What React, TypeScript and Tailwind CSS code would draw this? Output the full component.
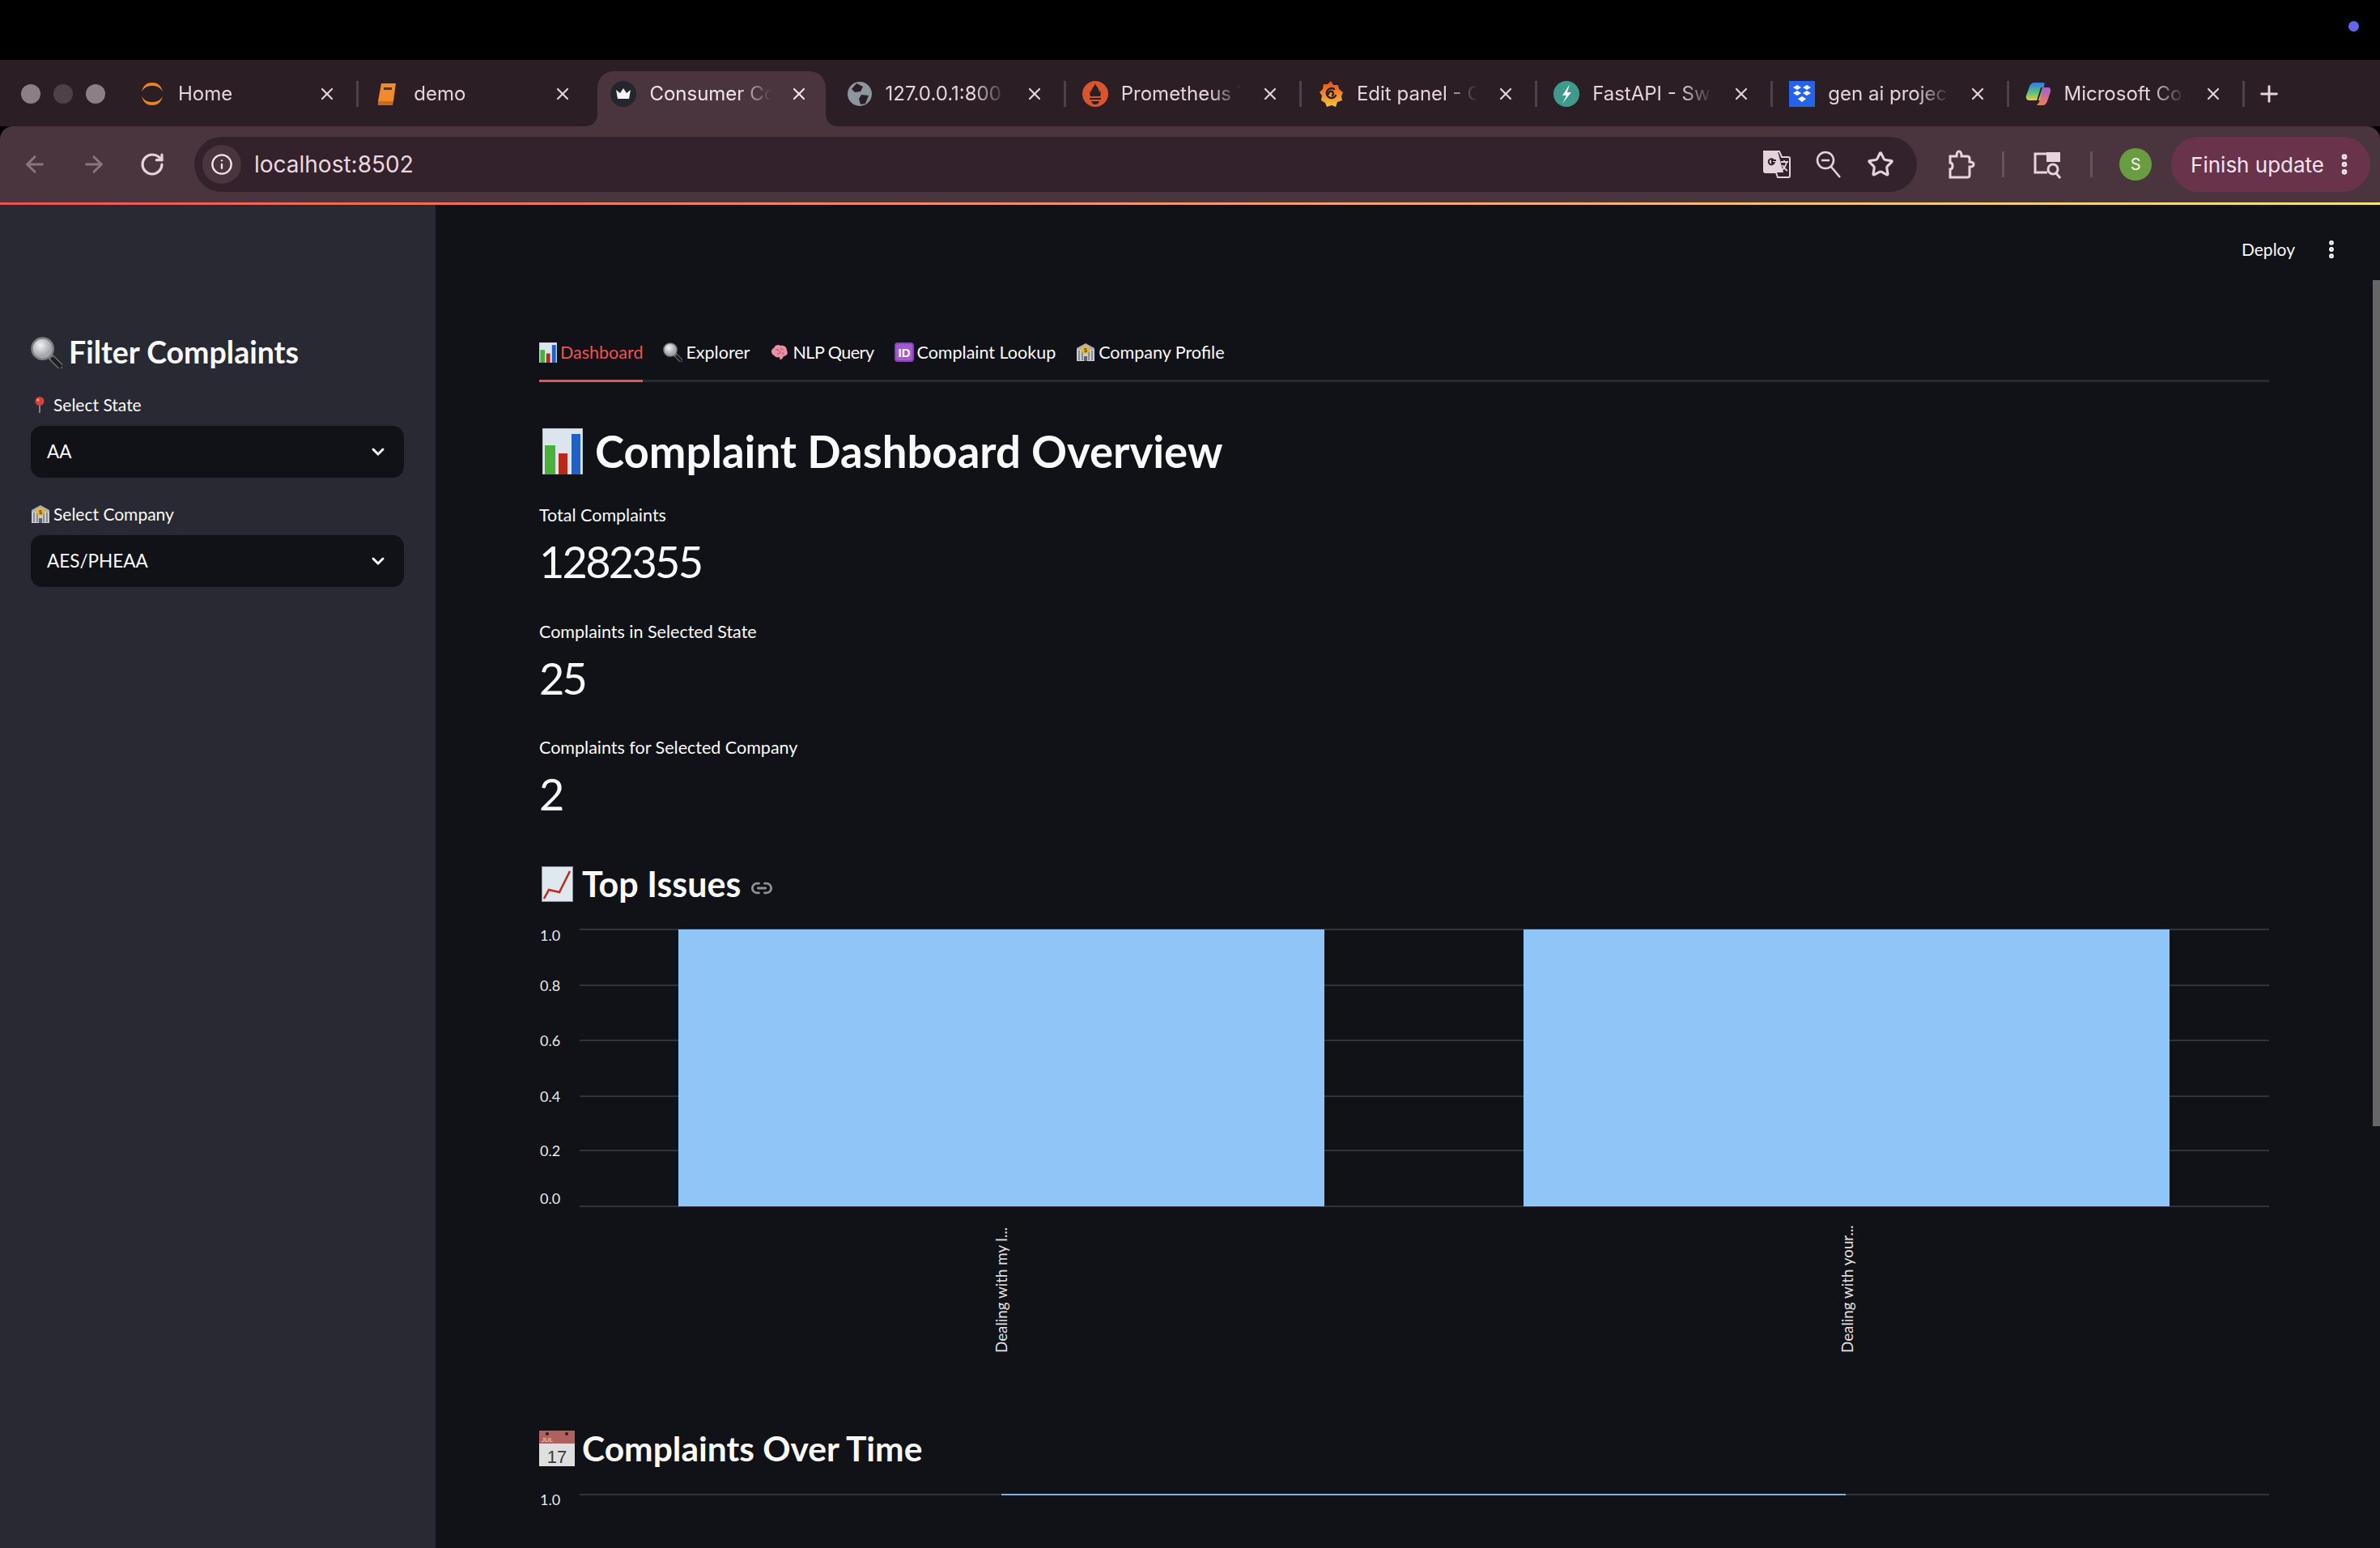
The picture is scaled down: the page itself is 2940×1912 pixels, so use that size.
import React from "react";
import { ArrowLeft, ArrowRight, RotateCw, Info, Star, Plus, X, EllipsisVertical, ChevronDown, Link2 } from "lucide-react";

const HomeIcon = () => (
  <svg viewBox="0 0 32 32" className="w-8 h-8 shrink-0">
    <path d="M3 13C5 5 10 2 16 2s11 3 13 11C25 7 21 6 16 6S7 7 3 13Z" fill="#e8822e" />
    <path d="M3 19c2 8 7 11 13 11s11-3 13-11c-4 6-8 7-13 7s-9-1-13-7Z" fill="#e8822e" />
  </svg>
);
const BookIcon = () => (
  <svg viewBox="0 0 32 32" className="w-8 h-8 shrink-0">
    <path d="M8 3h18l-3 22H4Z" fill="#f08a2c" />
    <path d="M4 25h19l-1 5H4Z" fill="#c96a1a" />
    <rect x="11" y="8" width="10" height="3" fill="#5c3415" />
  </svg>
);
const CrownIcon = () => (
  <svg viewBox="0 0 32 32" className="w-8 h-8 shrink-0">
    <circle cx="16" cy="16" r="16" fill="#23262e" />
    <path d="M7 11l5 4 4-6 4 6 5-4-2 11H9Z" fill="#f4f4f4" />
  </svg>
);
const GlobeIcon = () => (
  <svg viewBox="0 0 32 32" className="w-8 h-8 shrink-0">
    <circle cx="16" cy="16" r="15" fill="#8b979d" />
    <path d="M12 3l8 4-3 6-7 1-4-4ZM18 17l9 1-4 10-6 1-2-7Z" fill="#2c1e25" />
  </svg>
);
const PrometheusIcon = () => (
  <svg viewBox="0 0 32 32" className="w-8 h-8 shrink-0">
    <circle cx="16" cy="16" r="16" fill="#d9552e" />
    <path d="M16 3c1 4 5 6 5 11l1-2c1 3 1 5 0 7H10c-1-2-1-4 0-7l1 2c0-5 4-7 5-11Z" fill="#2c1e25" />
    <rect x="9" y="21" width="14" height="2" fill="#2c1e25" />
    <path d="M11 25h10c-1 3-3 4-5 4s-4-1-5-4Z" fill="#2c1e25" />
  </svg>
);
const GrafanaIcon = () => (
  <svg viewBox="0 0 32 32" className="w-8 h-8 shrink-0">
    <defs>
      <linearGradient id="graf" x1="0" y1="1" x2="0" y2="0">
        <stop offset="0" stopColor="#f5c33b" />
        <stop offset="1" stopColor="#e8501f" />
      </linearGradient>
    </defs>
    <path d="M16 0l3 5 6 0 1 5 5 4-2 5 1 5-6 2-2 6-5-2-6 2-2-5-5-3 1-6-3-4 4-4 1-6 5 0Z" fill="url(#graf)" />
    <path d="M22 18a6 6 0 1 1-2-8M13 16a3 3 0 1 1 5 2" fill="none" stroke="#2c1e25" strokeWidth="2.4" strokeLinecap="round" />
  </svg>
);
const FastApiIcon = () => (
  <svg viewBox="0 0 32 32" className="w-8 h-8 shrink-0">
    <circle cx="16" cy="16" r="16" fill="#3f9a8b" />
    <path d="M20 4L11 18h5l-5 10 11-14h-5Z" fill="#f4f4f4" />
  </svg>
);
const DropboxIcon = () => (
  <svg viewBox="0 0 32 32" className="w-8 h-8 shrink-0">
    <rect width="32" height="32" fill="#2563eb" />
    <path d="M10 5l5 3-5 3-5-3ZM22 5l5 3-5 3-5-3ZM10 12l5 3-5 3-5-3ZM22 12l5 3-5 3-5-3ZM16 19l5 3-5 4-5-4Z" fill="#fff" />
  </svg>
);
const CopilotIcon = () => (
  <svg viewBox="0 0 32 32" className="w-8 h-8 shrink-0">
    <defs>
      <linearGradient id="cop1" x1="0" y1="0" x2="0" y2="1">
        <stop offset="0" stopColor="#2c7be5" />
        <stop offset="0.6" stopColor="#5fc47a" />
        <stop offset="1" stopColor="#f2c83c" />
      </linearGradient>
      <linearGradient id="cop2" x1="0" y1="0" x2="0" y2="1">
        <stop offset="0" stopColor="#a55fd8" />
        <stop offset="1" stopColor="#f0814a" />
      </linearGradient>
    </defs>
    <path d="M11 2h11c2 0 2 2 1 4l-5 18H6C2 24 0 22 1 18L5 7c1-3 3-5 6-5Z" fill="url(#cop1)" />
    <path d="M14 30h7c3 0 5-2 6-5l4-12c1-3-1-5-3-5h-6l-5 18Z" fill="url(#cop2)" />
    <path d="M19 8l-5 16h2l5-16Z" fill="#2c1e25" />
  </svg>
);

const TranslateIcon = () => (
  <svg viewBox="0 0 34 34" className="w-[34px] h-[34px]">
    <path d="M1 1h19l3 7H31a2 2 0 0 1 2 2v21a2 2 0 0 1-2 2H18l-2-6H3a2 2 0 0 1-2-2Z" fill="none" stroke="#e4d3db" strokeWidth="2" />
    <path d="M1 3a2 2 0 0 1 2-2h15l7 26H3a2 2 0 0 1-2-2Z" fill="#e4d3db" />
    <path d="M16 12h-5v3h2.500a3.500 3.500 0 1 1-1-4" fill="none" stroke="#33212b" strokeWidth="2" />
    <path d="M22 14h9M26 12v2M29 14c-1 5-4 9-7 11M24 18c1 3 3 5 6 7" fill="none" stroke="#e4d3db" strokeWidth="1.800" />
  </svg>
);
const PageZoomIcon = () => (
  <svg viewBox="0 0 34 34" className="w-[34px] h-[34px]" fill="none" stroke="#e4d3db" strokeWidth="2.600">
    <circle cx="13" cy="12" r="10" />
    <path d="M8 12h10M20 20l11 13" />
  </svg>
);
const ExtensionIcon = () => (
  <svg viewBox="0 0 36 36" className="w-9 h-9" fill="none" stroke="#e8d4df" strokeWidth="3">
    <path d="M5 8h8c0-4 1-6 3-6s3 2 3 6h7c2 0 3 1 3 3v4c3 0 5 1 5 3s-2 3-5 3v10c0 2-1 3-3 3H5V24c2 0 3-2 3-4s-1-4-3-4Z" />
  </svg>
);
const TabSearchIcon = () => (
  <svg viewBox="0 0 36 36" className="w-9 h-9" fill="none">
    <path d="M18 28H3V5h14" stroke="#e8d4df" strokeWidth="3" />
    <path d="M17 3h17v12H17Z" fill="#e8d4df" />
    <circle cx="25" cy="24" r="6" stroke="#e8d4df" strokeWidth="3" />
    <path d="M29 29l5 6" stroke="#e8d4df" strokeWidth="3" />
  </svg>
);

const MagnifierEmoji = ({ w }: { w: number }) => (
  <svg viewBox="0 0 40 40" width={w} height={w} className="shrink-0">
    <defs>
      <radialGradient id="lens" cx="0.4" cy="0.35">
        <stop offset="0" stopColor="#f2f2f2" />
        <stop offset="1" stopColor="#a4a6aa" />
      </radialGradient>
    </defs>
    <path d="M25 25l12 12" stroke="#6b6e74" strokeWidth="8" strokeLinecap="round" />
    <path d="M28 28l9 9" stroke="#1c1d20" strokeWidth="5" strokeLinecap="round" />
    <circle cx="15" cy="15" r="13.500" fill="url(#lens)" stroke="#7b7e84" strokeWidth="2.500" />
  </svg>
);
const PinEmoji = () => (
  <svg viewBox="0 0 18 20" className="w-[18px] h-5 shrink-0">
    <path d="M9 8v12" stroke="#9a9a9a" strokeWidth="1.600" />
    <circle cx="9" cy="5.500" r="5.500" fill="#d9403a" />
    <circle cx="7" cy="4" r="1.500" fill="#f0a29c" />
  </svg>
);
const BankEmoji = ({ className }: { className: string }) => (
  <svg viewBox="0 0 24 24" className={className}>
    <path d="M12 1L23 7v2H1V7Z" fill="#aab0b3" />
    <rect x="1" y="9" width="22" height="14" fill="#c8ccce" />
    <path d="M4 10v12M8 10v12M16 10v12M20 10v12" stroke="#71787d" strokeWidth="1.500" />
    <circle cx="12" cy="9" r="5" fill="#eab72e" />
    <text x="12" y="11.500" fontSize="7" fontWeight="700" textAnchor="middle" fill="#5f4a10" fontFamily="Liberation Sans, sans-serif">$</text>
    <rect x="10" y="17" width="4" height="6" fill="#5d6468" />
  </svg>
);
const BarChartEmoji = ({ className }: { className: string }) => (
  <svg viewBox="0 0 50 57" className={className}>
    <rect width="50" height="57" fill="#dce5ee" stroke="#9aa3ab" strokeWidth="1" />
    <rect x="3" y="21" width="13" height="36" fill="#49b03e" />
    <rect x="20" y="31" width="11" height="26" fill="#b7281d" />
    <rect x="36" y="7" width="11" height="50" fill="#2460c4" />
  </svg>
);
const BrainEmoji = () => (
  <svg viewBox="0 0 24 24" className="w-6 h-6 shrink-0">
    <path d="M5 16C1 14 1 8 5 7c1-4 6-5 8-3 4-1 8 1 8 6 2 3 0 7-4 7-1 2-2 4-4 4-1 0-1-2-1-3-3 1-5 0-7-2Z" fill="#e990a5" />
    <path d="M7 9c2-1 4 0 4 2M13 7c1 2 3 2 4 2M9 14c2 0 4-1 4-3M15 12c1 2 2 2 3 2" fill="none" stroke="#b85c74" strokeWidth="1.200" />
  </svg>
);
const IdEmoji = () => (
  <svg viewBox="0 0 24 24" className="w-6 h-6 shrink-0">
    <rect width="24" height="24" rx="4" fill="#8a44b8" />
    <rect x="2" y="2" width="20" height="20" rx="2.500" fill="#a35ad0" />
    <text x="12" y="17.500" fontSize="15" fontWeight="700" textAnchor="middle" fill="#fff" fontFamily="Liberation Sans, sans-serif">ID</text>
  </svg>
);
const TrendEmoji = () => (
  <svg viewBox="0 0 39 44" className="w-[39px] h-[44px] shrink-0">
    <rect x="0.500" y="0.500" width="38" height="43" fill="#dfe7ef" stroke="#8b939b" />
    <path d="M3 40l6-11 13 3L35 6" fill="none" stroke="#bb2c1f" strokeWidth="2.600" />
  </svg>
);
const CalendarEmoji = () => (
  <svg viewBox="0 0 44 44" className="w-[44px] h-[44px] shrink-0">
    <rect width="44" height="44" fill="#dfdfdf" />
    <rect width="44" height="16" fill="#b0605f" />
    <circle cx="10" cy="4" r="2" fill="#222" />
    <circle cx="34" cy="4" r="2" fill="#222" />
    <text x="10" y="14" fontSize="8" textAnchor="middle" fill="#f2dede" fontFamily="Liberation Sans, sans-serif">JUL</text>
    <text x="22" y="40" fontSize="22" textAnchor="middle" fill="#3a3a3a" fontFamily="Liberation Sans, sans-serif">17</text>
  </svg>
);

type Tab = { title: string; icon: React.ReactNode; active?: boolean; sep?: boolean };

const tabs: Tab[] = [
  { title: "Home", icon: <HomeIcon />, sep: true },
  { title: "demo", icon: <BookIcon /> },
  { title: "Consumer Co", icon: <CrownIcon />, active: true },
  { title: "127.0.0.1:800", icon: <GlobeIcon />, sep: true },
  { title: "Prometheus T", icon: <PrometheusIcon />, sep: true },
  { title: "Edit panel - G", icon: <GrafanaIcon />, sep: true },
  { title: "FastAPI - Swa", icon: <FastApiIcon />, sep: true },
  { title: "gen ai project", icon: <DropboxIcon />, sep: true },
  { title: "Microsoft Cop", icon: <CopilotIcon />, sep: true },
];

const BrowserTab = ({ tab }: { tab: Tab }) => (
  <div className="relative w-[291.200px] h-[68px] shrink-0 flex items-center">
    {tab.active && (
      <>
        <div className="absolute inset-y-0 left-[5px] right-[5px] bg-[#4a353f] rounded-t-[20px]" />
        <svg viewBox="0 0 16 16" className="absolute bottom-0 left-[-11px] w-4 h-4">
          <path d="M16 0v16H0C10 16 16 10 16 0Z" fill="#4a353f" />
        </svg>
        <svg viewBox="0 0 16 16" className="absolute bottom-0 right-[-11px] w-4 h-4">
          <path d="M0 0v16h16C6 16 0 10 0 0Z" fill="#4a353f" />
        </svg>
      </>
    )}
    <div className="relative flex items-center w-full pl-[21px] pr-[26px] pb-[12px]">
      {tab.icon}
      <span
        className={`ml-[16px] flex-1 min-w-0 whitespace-nowrap text-[24px] leading-8 [mask-image:linear-gradient(to_right,black_72%,transparent_98%)] ${
          tab.active ? "text-[#f2e4ea]" : "text-[#e4d3db]"
        }`}
      >
        {tab.title}
      </span>
      <X className={`ml-[20px] w-6 h-6 shrink-0 ${tab.active ? "text-[#f2e4ea]" : "text-[#e4d3db]"}`} strokeWidth={2.2} />
    </div>
    {tab.sep && <div className="absolute right-[-1px] top-[12px] w-[3px] h-8 bg-[#50404a]" />}
  </div>
);

const BrowserChrome = () => (
  <div className="font-['Inter',sans-serif]">
    <div className="h-[74px] bg-black flex justify-end pt-[26px] pr-[26px]">
      <div className="w-[13px] h-[13px] rounded-full bg-[#6366e8]" />
    </div>
    <div className="h-[82px] bg-[#2c1e25] flex items-end pl-[26px]">
      <div className="flex items-center gap-4 h-[68px] mr-[21px] pb-[12px]">
        <div className="w-6 h-6 rounded-full bg-[#8a8085]" />
        <div className="w-6 h-6 rounded-full bg-[#4d4248]" />
        <div className="w-6 h-6 rounded-full bg-[#8a8085]" />
      </div>
      {tabs.map((t) => (
        <BrowserTab key={t.title} tab={t} />
      ))}
      <div className="h-[68px] flex items-center ml-[15px] pb-[12px]">
        <Plus className="w-8 h-8 text-[#e4d3db]" strokeWidth={2.2} />
      </div>
    </div>
    <div className="h-[94px] bg-[#4a353f] rounded-t-[16px] flex items-center pl-[27px] pr-[12px] relative">
      <ArrowLeft className="w-8 h-8 text-[#8a747f]" strokeWidth={2.2} />
      <ArrowRight className="w-8 h-8 ml-[41px] text-[#8a747f]" strokeWidth={2.2} />
      <RotateCw className="w-8 h-8 ml-[40px] text-[#e4d3db]" strokeWidth={2.4} />
      <div className="ml-[36px] w-[2129px] h-[68px] bg-[#33212b] rounded-full flex items-center pl-[10px] pr-[28px]">
        <div className="w-12 h-12 rounded-full bg-[#4a353f] flex items-center justify-center">
          <Info className="w-7 h-7 text-[#f0e2e8]" strokeWidth={2} />
        </div>
        <span className="ml-[16px] text-[28px] text-[#ead9e0]">localhost:8502</span>
        <div className="ml-auto flex items-center gap-[30px]">
          <TranslateIcon />
          <PageZoomIcon />
          <Star className="w-[34px] h-[34px] text-[#e4d3db]" strokeWidth={2.2} />
        </div>
      </div>
      <div className="ml-[36px]">
        <ExtensionIcon />
      </div>
      <div className="ml-[33px] w-[3px] h-8 bg-[#66525c]" />
      <div className="ml-[35px]">
        <TabSearchIcon />
      </div>
      <div className="ml-[35px] w-[3px] h-8 bg-[#66525c]" />
      <div className="ml-[33px] w-10 h-10 rounded-full bg-[#6a9c42] flex items-center justify-center text-[20px] text-[#f2f2f2]">S</div>
      <div className="ml-[24px] w-[246px] h-[68px] bg-[#6a334c] rounded-full flex items-center pl-[24px] text-[#f2e4ea]">
        <span className="text-[26px] whitespace-nowrap">Finish update</span>
        <EllipsisVertical className="w-8 h-8 ml-auto mr-[16px]" strokeWidth={3} />
      </div>
    </div>
    <div className="h-[3px] bg-gradient-to-r from-[#ef5350] via-[#f49a62] to-[#fde872]" />
  </div>
);

const Sidebar = () => (
  <aside className="w-[538px] shrink-0 bg-[#282932] pl-[38px] pr-[39px] pt-[160px]">
    <div className="flex items-center h-[44px]">
      <MagnifierEmoji w={39} />
      <h2 className="ml-[8px] text-[37.500px] font-bold text-[#fafafa] leading-[44px] whitespace-nowrap">Filter Complaints</h2>
    </div>
    <div className="flex items-center h-[30px] mt-[28px] pl-[2px]">
      <PinEmoji />
      <span className="ml-[8px] text-[21px] text-[#fafafa]">Select State</span>
    </div>
    <div className="mt-[11px] h-[64px] rounded-[14px] bg-[#101218] flex items-center justify-between pl-[20px] pr-[20px] text-[22.500px] text-[#fafafa]">
      AA
      <ChevronDown className="w-6 h-6" strokeWidth={3} />
    </div>
    <div className="flex items-center h-[30px] mt-[30px]">
      <BankEmoji className="w-6 h-6 shrink-0" />
      <span className="ml-[4px] text-[21px] text-[#fafafa]">Select Company</span>
    </div>
    <div className="mt-[11px] h-[64px] rounded-[14px] bg-[#101218] flex items-center justify-between pl-[20px] pr-[20px] text-[22.500px] text-[#fafafa]">
      AES/PHEAA
      <ChevronDown className="w-6 h-6" strokeWidth={3} />
    </div>
  </aside>
);

const Metric = ({ label, value }: { label: string; value: string }) => (
  <div>
    <div className="h-[30px] leading-[30px] text-[21.500px] text-[#fafafa]">{label}</div>
    <div className="mt-[7px] h-[72px] leading-[72px] text-[54px] tracking-[-0.05em] text-[#fafafa]">{value}</div>
  </div>
);

const IssuesChart = () => {
  const ticks = [
    { v: "1.0", y: 18, ly: 33 },
    { v: "0.8", y: 87, ly: 95 },
    { v: "0.6", y: 155, ly: 163 },
    { v: "0.4", y: 224, ly: 232 },
    { v: "0.2", y: 291, ly: 299 },
    { v: "0.0", y: 360, ly: 358 },
  ];
  return (
    <svg width="2137" height="560" className="block mt-[10px]">
      {ticks.map((t) => (
        <g key={t.v}>
          <line x1="50" x2="2137" y1={t.y} y2={t.y} stroke="#31333c" strokeWidth="2" />
          <text x="1" y={t.ly - 1} fontSize="18" fill="#e8e8e8" fontFamily="Lato, sans-serif">{t.v}</text>
        </g>
      ))}
      <rect x="172" y="18" width="798" height="342" fill="#90c5f8" />
      <rect x="1216" y="18" width="798" height="342" fill="#90c5f8" />
      <text transform="translate(578 541) rotate(-90)" fontSize="18.800" fill="#e0e0e0" fontFamily="Lato, sans-serif">Dealing with my l...</text>
      <text transform="translate(1623 541) rotate(-90)" fontSize="18.800" fill="#e0e0e0" fontFamily="Lato, sans-serif">Dealing with your...</text>
    </svg>
  );
};

const OverTimeChart = () => (
  <svg width="2137" height="82" className="block mt-[14px]">
    <line x1="50" x2="2137" y1="15" y2="15" stroke="#31333c" strokeWidth="2" />
    <line x1="571" x2="1614" y1="15" y2="15" stroke="#7fb0e0" strokeWidth="2" />
    <text x="1" y="28" fontSize="18" fill="#e8e8e8" fontFamily="Lato, sans-serif">1.0</text>
  </svg>
);

const navItems: { label: string; icon: React.ReactNode; active?: boolean; tight?: boolean }[] = [
  { label: "Dashboard", icon: <BarChartEmoji className="w-[22px] h-[25px] shrink-0" />, active: true },
  { label: "Explorer", icon: <MagnifierEmoji w={24} /> },
  { label: "NLP Query", icon: <BrainEmoji />, tight: true },
  { label: "Complaint Lookup", icon: <IdEmoji /> },
  { label: "Company Profile", icon: <BankEmoji className="w-6 h-6 shrink-0" /> },
];

const Main = () => (
  <main className="relative flex-1 min-w-0 bg-[#101218] pl-[128px] pr-[137px]">
    <div className="h-[110px] flex items-center justify-end -mr-[137px] pr-[46px] text-[#fafafa]">
      <span className="text-[21px]">Deploy</span>
      <EllipsisVertical className="ml-[31px] w-7 h-7" strokeWidth={3} />
    </div>
    <div className="mt-[57px] flex gap-[25px] border-b-[3px] border-[#282932]">
      {navItems.map((n) => (
        <div
          key={n.label}
          className={`flex items-center gap-[4px] h-[30px] pb-[19px] -mb-[3px] border-b-[3px] box-content text-[21.500px] leading-[30px] whitespace-nowrap ${
            n.active ? "border-[#ef5350] text-[#ef5350]" : "border-transparent text-[#fafafa]"
          } ${n.tight ? "tracking-[-0.5px]" : ""}`}
        >
          {n.icon}
          {n.label}
        </div>
      ))}
    </div>
    <div className="mt-[51px] h-[68px] flex items-center pl-[4px]">
      <BarChartEmoji className="w-[50px] h-[57px] shrink-0" />
      <h1 className="ml-[15px] text-[54.500px] font-bold leading-[68px] text-[#fafafa] whitespace-nowrap">Complaint Dashboard Overview</h1>
    </div>
    <div className="mt-[30px] flex flex-col gap-[34.500px]">
      <Metric label="Total Complaints" value="1282355" />
      <Metric label="Complaints in Selected State" value="25" />
      <Metric label="Complaints for Selected Company" value="2" />
    </div>
    <div className="mt-[47px] h-[56px] flex items-center pl-[3px]">
      <TrendEmoji />
      <h2 className="ml-[11px] text-[43px] font-bold leading-[56px] text-[#fafafa]">Top Issues</h2>
      <Link2 className="ml-[12px] w-[28px] h-[28px] mt-[10px] text-[#8f9196]" strokeWidth={2.4} />
    </div>
    <IssuesChart />
    <div className="mt-[71px] h-[56px] flex items-center">
      <CalendarEmoji />
      <h2 className="ml-[9px] text-[42.500px] font-bold leading-[56px] text-[#fafafa]">Complaints Over Time</h2>
    </div>
    <OverTimeChart />
    <div className="absolute right-0 top-[93px] w-[9px] h-[1045px] bg-[#666666]" />
  </main>
);

export default function App() {
  return (
    <div className="w-[2940px] h-[1912px] overflow-hidden flex flex-col bg-black font-['Lato',sans-serif]">
      <BrowserChrome />
      <div className="flex flex-1 min-h-0">
        <Sidebar />
        <Main />
      </div>
    </div>
  );
}
